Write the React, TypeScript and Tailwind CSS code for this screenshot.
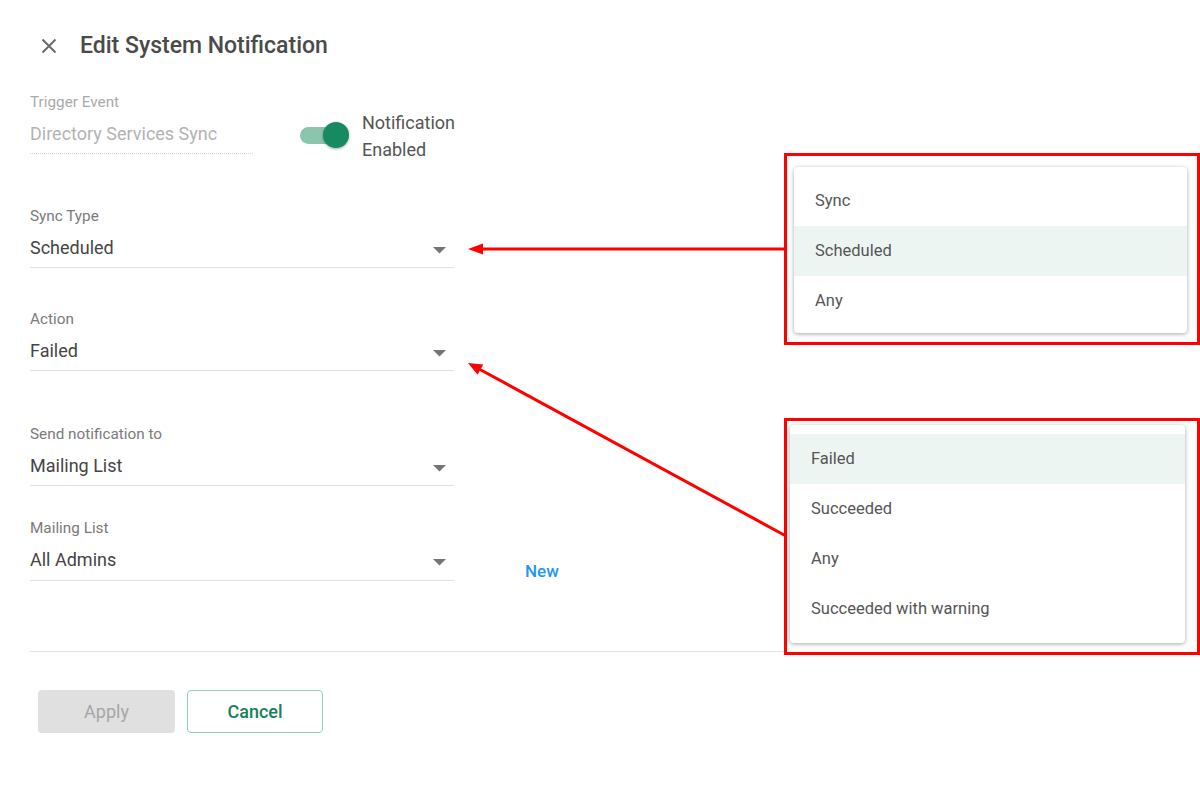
import React from "react";

const Caret = () => (
  <svg width="13" height="7" viewBox="0 0 13 7" className="mr-[8px] mt-[4px]">
    <polygon points="0,0 13,0 6.5,6.5" fill="#757575" />
  </svg>
);

type FieldProps = { label: string; value: string; className?: string };

const Field = ({ label, value, className = "pb-[7px]" }: FieldProps) => (
  <div className={`w-[424px] border-b border-[#e0e0e0] ${className}`}>
    <div className="text-[15.3px] leading-[20px] text-[#7a7a7a]">{label}</div>
    <div className="mt-[10px] flex h-[24px] items-center justify-between">
      <span className="text-[18px] leading-[24px] text-[#454545]">{value}</span>
      <Caret />
    </div>
  </div>
);

const MenuItem = ({ text, active = false }: { text: string; active?: boolean }) => (
  <div
    className={`flex h-[50px] items-center pl-[21px] text-[16.5px] text-[#555555] ${
      active ? "bg-[#edf5f2]" : ""
    }`}
  >
    {text}
  </div>
);

export default function App() {
  return (
    <div className="relative h-[790px] w-[1200px] overflow-hidden bg-white font-['Roboto',sans-serif]">
      {/* Header */}
      <div className="mt-[31px] flex h-[28px] items-center">
        <svg width="16" height="16" viewBox="0 0 16 16" className="ml-[41px] mt-[1px]">
          <path d="M1.5 1.5 L14.5 14.5 M14.5 1.5 L1.5 14.5" stroke="#666666" strokeWidth="1.8" strokeLinecap="butt" />
        </svg>
        <h1 className="ml-[23px] mt-[1px] text-[23px] font-medium leading-[28px] text-[#4a4a4a]">
          Edit System Notification
        </h1>
      </div>

      <div className="pl-[30px]">
        {/* Trigger row */}
        <div className="mt-[33px] flex items-start">
          <div className="w-[223px] border-b border-dotted border-[#d6d6d6] pb-[7px]">
            <div className="text-[15.3px] leading-[20px] text-[#ababab]">Trigger Event</div>
            <div className="mt-[10px] text-[18px] leading-[24px] text-[#b3b3b3]">Directory Services Sync</div>
          </div>
          <div className="ml-[46px] mt-[16px] flex h-[54px] items-center">
            <div className="relative h-[26px] w-[50px]">
              <div className="absolute left-[1px] top-[5px] h-[17px] w-[46px] rounded-full bg-[#8cc5ae]" />
              <div className="absolute right-0 top-0 h-[26px] w-[26px] rounded-full bg-[#168a61] shadow-[0_1px_3px_rgba(0,0,0,0.35)]" />
            </div>
            <div className="ml-[13px] mt-[1px] text-[18px] leading-[27px] text-[#555555]">
              <div>Notification</div>
              <div>Enabled</div>
            </div>
          </div>
        </div>

        <Field label="Sync Type" value="Scheduled" className="mt-[44px] pb-[7px]" />
        <Field label="Action" value="Failed" className="mt-[41px] pb-[7px]" />
        <Field label="Send notification to" value="Mailing List" className="mt-[53px] pb-[7px]" />

        <div className="mt-[32px] flex items-start">
          <Field label="Mailing List" value="All Admins" className="pb-[8px]" />
          <button className="ml-[71px] mt-[43px] text-[17px] font-medium leading-[20px] text-[#2196f3]">New</button>
        </div>

        <div className="mt-[70px] h-px bg-[#e3e3e3]" />

        <div className="ml-[8px] mt-[38px] flex gap-[12px]">
          <button className="h-[43px] w-[137px] rounded-[4px] bg-[#e0e0e0] text-[18px] text-[#a6a6a6]">Apply</button>
          <button className="h-[43px] w-[136px] rounded-[4px] border border-[#8fd1b8] bg-white text-[18px] font-medium text-[#17805c]">
            Cancel
          </button>
        </div>
      </div>

      {/* Annotation: Sync Type menu */}
      <div className="absolute left-[784px] top-[153px] h-[192px] w-[416px] border-[3px] border-[#ff0000] bg-white pb-[9px] pl-[7px] pr-[10px] pt-[11px]">
        <div className="rounded-[4px] bg-white pb-[7px] pt-[9px] shadow-[0_1px_4px_rgba(0,0,0,0.35)]">
          <MenuItem text="Sync" />
          <MenuItem text="Scheduled" active />
          <MenuItem text="Any" />
        </div>
      </div>

      {/* Annotation: Action menu */}
      <div className="absolute left-[784px] top-[418px] h-[237px] w-[416px] border-[3px] border-[#ff0000] bg-white pb-[9px] pl-[3px] pr-[12px] pt-[4px]">
        <div className="rounded-[4px] bg-white pb-[9px] pt-[9px] shadow-[0_1px_4px_rgba(0,0,0,0.35)]">
          <MenuItem text="Failed" active />
          <MenuItem text="Succeeded" />
          <MenuItem text="Any" />
          <MenuItem text="Succeeded with warning" />
        </div>
      </div>

      {/* Arrows */}
      <svg className="pointer-events-none absolute left-0 top-0" width="1200" height="790">
        <line x1="786" y1="249" x2="480" y2="249" stroke="#ff0000" strokeWidth="3" />
        <polygon points="468,249 483,243.5 483,254.5" fill="#ff0000" />
        <line x1="786" y1="536" x2="480" y2="369.5" stroke="#ff0000" strokeWidth="3" />
        <polygon points="468,363 483.2,364.6 477.6,374.8" fill="#ff0000" />
      </svg>
    </div>
  );
}
